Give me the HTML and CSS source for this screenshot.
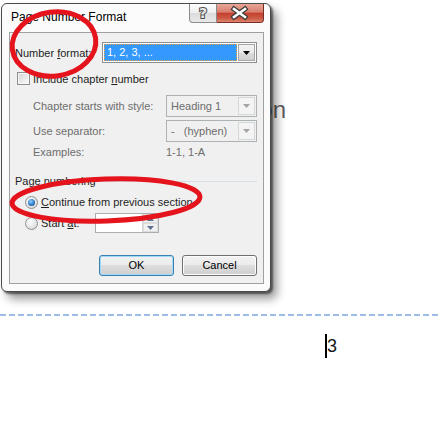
FILE: index.html
```html
<!DOCTYPE html>
<html>
<head>
<meta charset="utf-8">
<title>Page Number Format</title>
<link rel="stylesheet" href="styles.css">
</head>
<body>
<div class="doc">
  <div class="doc-heading">tion</div>
  <div class="page-break"></div>
  <div class="doc-line"><span class="caret"></span>3</div>
</div>

<div class="dialog">
  <div class="titlebar">
    <span class="title">Page Number Format</span>
    <div class="caption-btns">
      <div class="cbtn help">
        <svg width="26" height="18" viewBox="0 0 26 18"><text x="13" y="14" text-anchor="middle" class="help-glyph">?</text></svg>
      </div>
      <div class="cbtn close">
        <svg width="46" height="18" viewBox="0 0 46 18">
          <path d="M17 5 L28 13 M28 5 L17 13" stroke="#3b3b3b" stroke-width="5" stroke-linecap="square" fill="none"/>
          <path d="M17 5 L28 13 M28 5 L17 13" stroke="#ffffff" stroke-width="2.6" stroke-linecap="square" fill="none"/>
        </svg>
      </div>
    </div>
  </div>
  <div class="client">
    <div class="row r1">
      <span class="label-main">Number <u>f</u>ormat:</span>
      <div class="combo">
        <span class="value">1, 2, 3, ...</span>
        <span class="arrow"><svg width="7" height="4" viewBox="0 0 7 4"><path d="M0 0H7L3.5 4Z" fill="#000"/></svg></span>
      </div>
    </div>
    <div class="row r2">
      <span class="check"></span>
      <span>Include chapter <u>n</u>umber</span>
    </div>
    <div class="row r3 indent">
      <span class="label-sub">Chapter starts with style:</span>
      <div class="combo disabled">
        <span class="value">Heading 1</span>
        <span class="arrow"><svg width="7" height="4" viewBox="0 0 7 4"><path d="M0 0H7L3.5 4Z" fill="#a3a3a3"/></svg></span>
      </div>
    </div>
    <div class="row r4 indent">
      <span class="label-sub">Use separator:</span>
      <div class="combo disabled">
        <span class="value">-&nbsp;&nbsp;&nbsp;(hyphen)</span>
        <span class="arrow"><svg width="7" height="4" viewBox="0 0 7 4"><path d="M0 0H7L3.5 4Z" fill="#a3a3a3"/></svg></span>
      </div>
    </div>
    <div class="row r5 indent">
      <span class="label-sub">Examples:</span>
      <span class="dim">1-1, 1-A</span>
    </div>
    <div class="row r6">
      <span>Page numbering</span>
      <span class="group-line"></span>
    </div>
    <div class="row r7">
      <span class="radio on"></span>
      <span><u>C</u>ontinue from previous section</span>
    </div>
    <div class="row r8">
      <span class="radio"></span>
      <span class="start-label">Start <u>a</u>t:</span>
      <div class="spin">
        <div class="spin-btns">
          <span class="sb"><svg width="7" height="4" viewBox="0 0 7 4"><path d="M0 4H7L3.5 0Z" fill="#5d6f93"/></svg></span>
          <span class="sb"><svg width="7" height="4" viewBox="0 0 7 4"><path d="M0 0H7L3.5 4Z" fill="#5d6f93"/></svg></span>
        </div>
      </div>
    </div>
    <div class="row r9">
      <span class="btn default">OK</span>
      <span class="btn">Cancel</span>
    </div>
  </div>
</div>

<svg class="marks" width="438" height="424" viewBox="0 0 438 424">
  <ellipse cx="54" cy="44" rx="42" ry="32" transform="rotate(-8 54 44)" fill="none" stroke="#e5131c" stroke-width="5"/>
  <ellipse cx="106" cy="200" rx="94" ry="21" transform="rotate(-2 106 200)" fill="none" stroke="#e5131c" stroke-width="5"/>
</svg>
</body>
</html>
```
FILE: styles.css
```css
* { box-sizing: border-box; }
html, body { margin: 0; padding: 0; background: #fff; }
body {
  width: 438px;
  height: 424px;
  overflow: hidden;
  position: relative;
  font-family: "Liberation Sans", Arial, sans-serif;
  font-size: 11px;
  color: #1e1e1e;
}

/* background document */
.doc { padding-top: 95px; }
.doc-heading {
  width: 286px;
  text-align: right;
  font-family: "Liberation Sans", sans-serif;
  font-size: 24px;
  line-height: 30px;
  color: #5f5f5f;
  white-space: nowrap;
}
.page-break {
  margin-top: 189px;
  height: 2px;
  background: repeating-linear-gradient(90deg, #9dbde6 0 6px, transparent 6px 9px);
}
.doc-line {
  margin-top: 18px;
  padding-left: 325px;
  height: 24px;
  line-height: 24px;
  font-family: "Liberation Sans", sans-serif;
  font-size: 18px;
  color: #141414;
  display: flex;
}
.caret { width: 2px; height: 24px; background: #000; }

/* dialog window */
.dialog {
  position: absolute;
  left: 1px;
  top: 3px;
  width: 270px;
  height: 289px;
  background: #fbfbfb;
  border: 1px solid #4a4a4a;
  border-radius: 6px;
  box-shadow: 2px 2px 2px rgba(0,0,0,.5), 6px 7px 10px rgba(0,0,0,.4);
  display: flex;
  flex-direction: column;
}
.titlebar { height: 28px; display: flex; align-items: flex-start; }
.title { padding: 5px 0 0 9px; line-height: 16px; font-size: 12px; color: #000; }
.caption-btns { margin-left: auto; margin-right: 6px; display: flex; }
.cbtn { height: 19px; display: flex; align-items: center; justify-content: center; }
.help {
  width: 28px;
  border: 1px solid #8a8a8a;
  border-top: none;
  border-radius: 0 0 0 4px;
  background: linear-gradient(#fdfdfd, #eeeeee 50%, #dcdcdc 52%, #e9e9e9);
}
.help-glyph {
  font-family: "DejaVu Sans", sans-serif;
  font-weight: bold;
  font-size: 14px;
  fill: #e8e8e8;
  stroke: #4e4e4e;
  stroke-width: 2;
  paint-order: stroke;
}
.close {
  width: 47px;
  border: 1px solid #7a2e25;
  border-top: none;
  border-left: none;
  border-radius: 0 0 4px 0;
  background: linear-gradient(#e8a798, #d97e6f 45%, #c4412f 52%, #cf5b45 80%, #dd8670);
}

.client {
  margin: 0 6px 7px 7px;
  flex: 1;
  border: 1px solid #a0a0a0;
  background: #f0f0f0;
  padding: 0 6px 0 5px;
  display: flex;
  flex-direction: column;
}
.row { display: flex; align-items: center; white-space: nowrap; }
.indent { padding-left: 18px; }
.r1 { margin-top: 9px; height: 21px; }
.r2 { margin-top: 8px; height: 15px; }
.r3 { margin-top: 9px; height: 22px; }
.r4 { margin-top: 3px; height: 22px; }
.r5 { margin-top: 3px; height: 14px; }
.r6 { margin-top: 15px; height: 14px; }
.r7 { margin-top: 7px; height: 14px; }
.r8 { margin-top: 4px; height: 20px; }
.r9 { margin-top: 22px; height: 21px; justify-content: flex-end; gap: 8px; }

.label-main { width: 87px; }
.label-sub { width: 133px; color: #6d6d6d; }
.dim { color: #6d6d6d; }

.combo {
  flex: 1;
  align-self: stretch;
  display: flex;
  border: 1px solid #8e8f8f;
  background: #fff;
  padding: 1px;
}
.combo .value {
  flex: 1;
  background: #3399ff;
  color: #fff;
  padding-left: 2px;
  line-height: 15px;
  border: 1px dotted #f0a040;
}
.combo .arrow {
  width: 17px;
  margin-left: 1px;
  border: 1px solid #a6a6a6;
  background: linear-gradient(#f2f2f2, #ebebeb 50%, #dddddd 50%, #cfcfcf);
  display: flex;
  align-items: center;
  justify-content: center;
}
.combo.disabled { border-color: #adb2b5; background: #f0f0f0; padding: 0; }
.combo.disabled .value {
  background: transparent;
  color: #6d6d6d;
  border: none;
  padding-left: 4px;
  line-height: 20px;
}
.combo.disabled .arrow {
  width: 17px;
  margin: 1px;
  border: 1px solid #d5d8da;
  background: #f4f4f4;
}

.check {
  width: 13px;
  height: 13px;
  margin-left: 2px;
  margin-right: 3px;
  border: 1px solid #8e8f8f;
  background: linear-gradient(135deg, #d6d6d6, #fafafa);
  box-shadow: inset 0 0 0 1px #f6f6f6;
}

.group-line { flex: 1; height: 1px; background: #d5dfe5; margin: 0 0 0 4px; }

.radio {
  width: 13px;
  height: 13px;
  margin-left: 10px;
  margin-right: 3px;
  border-radius: 50%;
  border: 1px solid #8e8f8f;
  background: radial-gradient(circle at 40% 35%, #ffffff, #d0d0d0);
  display: flex;
  align-items: center;
  justify-content: center;
  flex: none;
}
.radio.on::after {
  content: "";
  width: 7px;
  height: 7px;
  border-radius: 50%;
  background: radial-gradient(circle at 40% 35%, #8fd0ff, #2f7bc7 55%, #0f3f7a);
}
.start-label { width: 54px; }

.spin {
  width: 64px;
  height: 20px;
  border: 1px solid #abadb3;
  background: #fff;
  display: flex;
  justify-content: flex-end;
}
.spin-btns {
  width: 16px;
  display: flex;
  flex-direction: column;
  border-left: 1px solid #d5d5d5;
}
.sb {
  flex: 1;
  display: flex;
  align-items: center;
  justify-content: center;
  background: #f0f0f0;
  border: 1px solid #dcdcdc;
}

.btn {
  width: 75px;
  height: 21px;
  border: 1px solid #707070;
  border-radius: 3px;
  background: linear-gradient(#f2f2f2, #ebebeb 50%, #dddddd 50%, #cfcfcf);
  box-shadow: inset 0 0 0 1px #fcfcfc;
  text-align: center;
  line-height: 19px;
  color: #000;
}
.btn.default { border-color: #3c7fb1; box-shadow: inset 0 0 0 1px #9fdaf4; }

.marks { position: absolute; left: 0; top: 0; pointer-events: none; }
```
